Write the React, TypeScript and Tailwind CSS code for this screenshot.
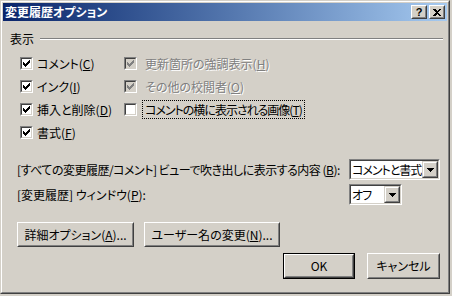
import React from "react"

const face = "bg-[#d4d0c8]"

// 7x7 classic check mark, one 1x3 column per x
const checkCols = [2, 3, 4, 3, 2, 1, 0]

function CheckMark({ color }: { color: string }) {
  return (
    <svg width="7" height="7" viewBox="0 0 7 7" shapeRendering="crispEdges">
      {checkCols.map((y, x) => (
        <rect key={x} x={x} y={y} width="1" height="3" fill={color} />
      ))}
    </svg>
  )
}

function Check({ checked, disabled }: { checked?: boolean; disabled?: boolean }) {
  return (
    <div className="w-[13px] h-[13px] shrink-0 border border-t-[#808080] border-l-[#808080] border-r-white border-b-white">
      <div
        className={`w-full h-full flex items-center justify-center border border-t-[#404040] border-l-[#404040] border-r-[#d4d0c8] border-b-[#d4d0c8] ${
          disabled ? "bg-[#d4d0c8]" : "bg-white"
        }`}
      >
        {checked && <CheckMark color={disabled ? "#808080" : "#000"} />}
      </div>
    </div>
  )
}

function Raised({ children, className }: { children: React.ReactNode; className: string }) {
  return (
    <div className={`${className} shrink-0 border border-t-white border-l-white border-r-[#404040] border-b-[#404040] ${face}`}>
      <div className="w-full h-full flex items-center justify-center border border-t-[#d4d0c8] border-l-[#d4d0c8] border-r-[#808080] border-b-[#808080]">
        {children}
      </div>
    </div>
  )
}

function Combo({ value, className }: { value: string; className: string }) {
  return (
    <div className={`${className} shrink-0 h-[21px] border border-t-[#808080] border-l-[#808080] border-r-white border-b-white`}>
      <div className="w-full h-full flex border border-t-[#404040] border-l-[#404040] border-r-[#d4d0c8] border-b-[#d4d0c8] bg-white">
        <span className="flex-1 min-w-0 flex items-center pl-[1px] overflow-hidden whitespace-nowrap tracking-[-1px]">
          {value}
        </span>
        <div className="w-[16px] shrink-0 h-full border border-t-[#d4d0c8] border-l-[#d4d0c8] border-r-[#404040] border-b-[#404040] bg-[#d4d0c8]">
          <div className="w-full h-full flex items-center justify-center border border-t-white border-l-white border-r-[#808080] border-b-[#808080]">
            <svg width="7" height="4" viewBox="0 0 7 4" shapeRendering="crispEdges">
              <polygon points="0,0 7,0 3.5,4" fill="#000" />
            </svg>
          </div>
        </div>
      </div>
    </div>
  )
}

function Key({ k }: { k: string }) {
  return <span className="underline underline-offset-[1px]">{k}</span>
}

function Label({
  children,
  disabled,
  focused,
  tight,
}: {
  children: React.ReactNode
  disabled?: boolean
  focused?: boolean
  tight?: boolean
}) {
  return (
    <span
      className={`px-[2px] py-[1px] leading-[15px] whitespace-nowrap border ${
        focused ? "border-dotted border-black" : "border-transparent"
      } ${disabled ? "text-[#808080] [text-shadow:1px_1px_0_#fff]" : "text-black"} ${
        tight ? "tracking-[-1px]" : ""
      }`}
    >
      {children}
    </span>
  )
}

export default function App() {
  return (
    <div className="w-[452px] h-[296px] bg-[#d4d0c8] font-['Noto_Sans_CJK_JP',sans-serif] text-[12px] [font-feature-settings:'palt'] text-black">
      <div className="w-[450px] h-[294px] border border-t-[#d4d0c8] border-l-[#d4d0c8] border-r-[#404040] border-b-[#404040]">
        <div className="w-full h-full flex flex-col border border-t-white border-l-white border-r-[#808080] border-b-[#808080]">
          {/* title bar */}
          <div className="p-[1px]">
            <div className="h-[18px] flex items-center bg-gradient-to-r from-[#0a246a] to-[#a6caf0] pl-[2px] pr-[2px]">
              <span className="flex-1 text-white font-bold leading-none">変更履歴オプション</span>
              <div className="flex gap-[2px]">
                <Raised className="w-[16px] h-[14px]">
                  <span className="font-['Liberation_Sans',sans-serif] font-bold text-[11px] leading-none">?</span>
                </Raised>
                <Raised className="w-[16px] h-[14px]">
                  <svg width="8" height="7" viewBox="0 0 8 7" shapeRendering="crispEdges">
                    <path d="M0 0h2l2 2 2-2h2l-3 3.5 3 3.5h-2l-2-2-2 2h-2l3-3.5z" fill="#000" />
                  </svg>
                </Raised>
              </div>
            </div>
          </div>

          {/* 表示 */}
          <div className="mt-[10px] h-[14px] flex items-center pl-[8px] pr-[5px]">
            <span className="leading-none">表示</span>
            <div className="flex-1 ml-[6px] h-[2px] border-t border-t-[#808080] border-b border-b-white" />
          </div>

          <div className="mt-[6px] ml-[18px] grid grid-cols-[104px_1fr]">
            <div className="h-[23px] flex items-center gap-[1px]">
              <Check checked />
              <Label>
                コメント(<Key k="C" />)
              </Label>
            </div>
            <div className="h-[23px] flex items-center gap-[5px]">
              <Check checked disabled />
              <Label disabled>
                更新箇所の強調表示(<Key k="H" />)
              </Label>
            </div>
            <div className="h-[23px] flex items-center gap-[1px]">
              <Check checked />
              <Label>
                インク(<Key k="I" />)
              </Label>
            </div>
            <div className="h-[23px] flex items-center gap-[5px]">
              <Check checked disabled />
              <Label disabled>
                その他の校閲者(<Key k="O" />)
              </Label>
            </div>
            <div className="h-[23px] flex items-center gap-[1px]">
              <Check checked />
              <Label>
                挿入と削除(<Key k="D" />)
              </Label>
            </div>
            <div className="h-[23px] flex items-center gap-[5px]">
              <Check />
              <Label focused tight>
                コメントの横に表示される画像(<Key k="T" />)
              </Label>
            </div>
            <div className="h-[23px] flex items-center gap-[1px]">
              <Check checked />
              <Label>
                書式(<Key k="F" />)
              </Label>
            </div>
          </div>

          <div className="mt-[15px] h-[21px] flex items-center pl-[15px] pr-[8px]">
            <span className="flex-1 whitespace-nowrap tracking-[-0.5px]">
              [すべての変更履歴/コメント] ビューで吹き出しに表示する内容 (<Key k="B" />):
            </span>
            <Combo value="コメントと書式" className="w-[91px]" />
          </div>

          <div className="mt-[4px] h-[21px] flex items-center pl-[15px] pr-[8px]">
            <span className="flex-1 whitespace-nowrap">
              [変更履歴] ウィンドウ(<Key k="P" />):
            </span>
            <div className="w-[91px] shrink-0">
              <Combo value="オフ" className="w-[53px]" />
            </div>
          </div>

          <div className="mt-[17px] flex gap-[10px] pl-[15px]">
            <Raised className="w-[117px] h-[25px]">
              <span>
                詳細オプション(<Key k="A" />)...
              </span>
            </Raised>
            <Raised className="w-[136px] h-[25px]">
              <span>
                ユーザー名の変更(<Key k="N" />)...
              </span>
            </Raised>
          </div>

          <div className="mt-[6px] flex justify-end gap-[12px] pr-[8px]">
            <div className="w-[72px] h-[26px] border border-black">
              <Raised className="w-full h-full">
                <span>OK</span>
              </Raised>
            </div>
            <Raised className="w-[73px] h-[26px]">
              <span>キャンセル</span>
            </Raised>
          </div>
        </div>
      </div>
    </div>
  )
}
